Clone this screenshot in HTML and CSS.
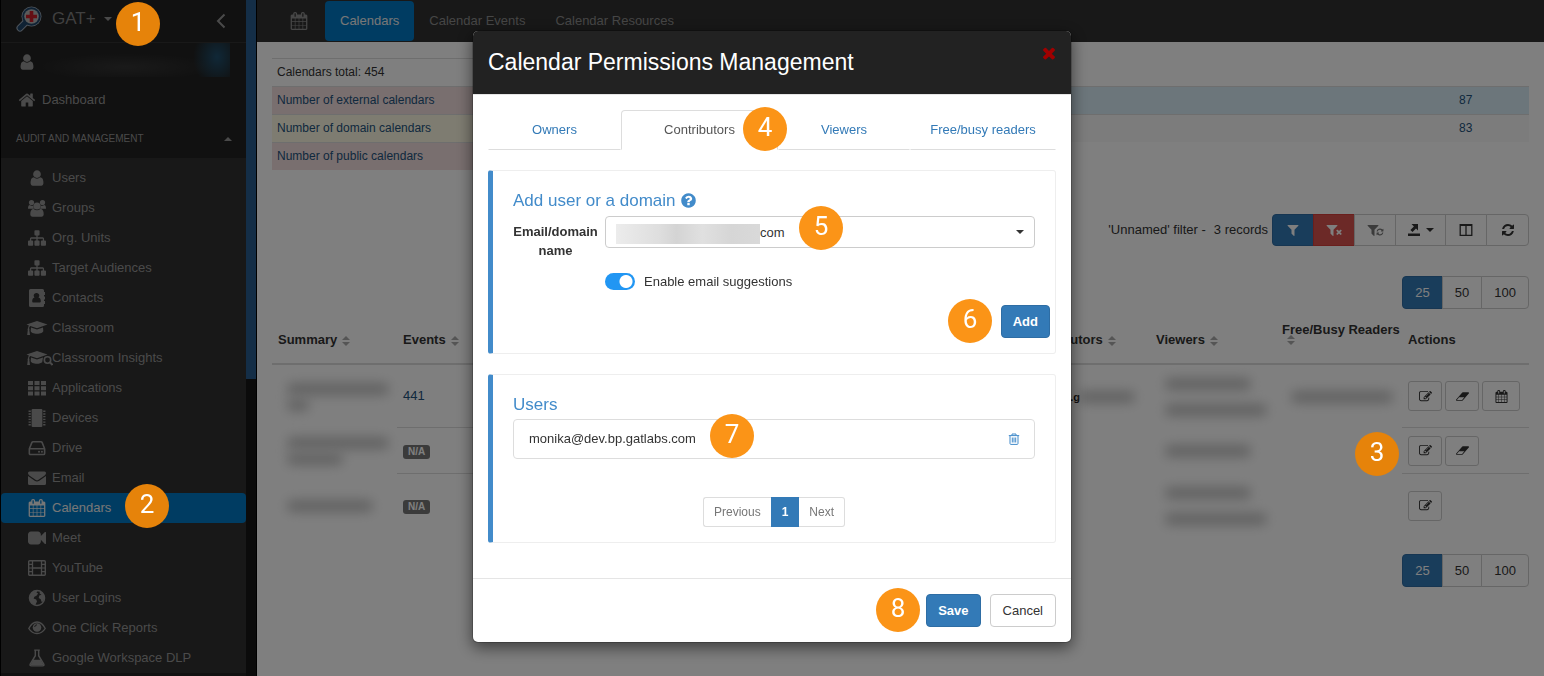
FILE: index.html
```
<!DOCTYPE html>
<html lang="en">
<head>
	<meta charset="utf-8">
	<title>GAT+ Calendars</title>
	<link rel="stylesheet" href="styles.css">
</head>
<body>

	<!-- icon set -->
	<svg class="sprite" aria-hidden="true">
		<symbol id="i-user" viewBox="0 0 1792 1792"><path d="M1536 1399q0 109-62.5 187t-150.5 78h-854q-88 0-150.5-78t-62.5-187q0-85 8.5-160.5t31.5-152 58.5-131 94-89 134.5-34.5q131 128 313 128t313-128q76 0 134.5 34.5t94 89 58.5 131 31.5 152 8.5 160.5zm-256-887q0 159-112.5 271.5t-271.5 112.5-271.5-112.5-112.5-271.5 112.5-271.5 271.5-112.5 271.5 112.5 112.5 271.5z"/></symbol>
		<symbol id="i-home" viewBox="0 0 1792 1792"><path d="M1472 992v480q0 26-19 45t-45 19h-384v-384h-256v384h-384q-26 0-45-19t-19-45v-480q0-1 .5-3t.5-3l575-474 575 474q1 2 1 6zm223-69l-62 74q-8 9-21 11h-3q-13 0-21-7l-692-577-692 577q-12 8-24 7-13-2-21-11l-62-74q-8-10-7-23.5t11-21.5l719-599q32-26 76-26t76 26l244 204v-195q0-14 9-23t23-9h192q14 0 23 9t9 23v408l219 182q10 8 11 21.5t-7 23.5z"/></symbol>
		<symbol id="i-group" viewBox="0 0 18 18"><circle cx="3.5" cy="3.6" r="2.6"/><circle cx="14.5" cy="3.6" r="2.6"/><path d="M0 9.5C0 7 .8 6 2 6c1 1 2.200 1.100 3.400.6A5 5 0 0 0 6 9.800H1.500C.5 9.800 0 9.800 0 9.500zM18 9.500C18 7 17.200 6 16 6c-1 1-2.200 1.100-3.400.6a5 5 0 0 1-.6 3.200h4.500c1 0 1.500 0 1.500-.3z"/><circle cx="9" cy="7" r="3.600"/><path d="M2.300 15.300c0-3.300 1-5.300 3.300-5.300 2 1.700 4.800 1.700 6.800 0 2.300 0 3.300 2 3.300 5.300 0 1.500-.9 2.400-2.200 2.400h-9c-1.300 0-2.200-.9-2.200-2.400z"/></symbol>
		<symbol id="i-sitemap" viewBox="0 0 1792 1792"><path d="M1792 1248v320q0 40-28 68t-68 28h-320q-40 0-68-28t-28-68v-320q0-40 28-68t68-28h96v-192h-512v192h96q40 0 68 28t28 68v320q0 40-28 68t-68 28h-320q-40 0-68-28t-28-68v-320q0-40 28-68t68-28h96v-192h-512v192h96q40 0 68 28t28 68v320q0 40-28 68t-68 28h-320q-40 0-68-28t-28-68v-320q0-40 28-68t68-28h96v-192q0-52 38-90t90-38h512v-192h-96q-40 0-68-28t-28-68v-320q0-40 28-68t68-28h320q40 0 68 28t28 68v320q0 40-28 68t-68 28h-96v192h512q52 0 90 38t38 90v192h96q40 0 68 28t28 68z"/></symbol>
		<symbol id="i-contacts" viewBox="0 0 18 18"><path fill-rule="evenodd" d="M2.500 0h12A1.500 1.500 0 0 1 16 1.500V3h1v3h-1v1.500h1v3h-1V12h1v3h-1v1.500a1.500 1.500 0 0 1-1.500 1.500h-12A1.500 1.500 0 0 1 1 16.500v-15A1.500 1.500 0 0 1 2.500 0zM8.500 4a2.600 2.600 0 0 0-2 4.500C4.800 8.800 4.200 10.500 4.200 12.200c0 .8.500 1.300 1.300 1.300h6c.8 0 1.300-.5 1.300-1.300 0-1.700-.6-3.400-2.300-3.700A2.600 2.600 0 0 0 8.500 4z"/></symbol>
		<symbol id="i-grad" viewBox="0 0 22 16"><path d="M11 1l10.500 3.600L11 8.200 4.300 5.900c-.8.600-1.100 1.500-1.200 2.600.5.300.6 1 .2 1.500L4 15H1.200l.6-5c-.4-.5-.3-1.200.2-1.500.1-1 .3-2 .9-2.900L.5 4.600z"/><path d="M5 7.500l6 2 6-2 .3 3.500c0 1.500-2.800 2.700-6.300 2.700S4.700 12.500 4.700 11z"/></symbol>
		<symbol id="i-gradsearch" viewBox="0 0 27 16"><path d="M11 1l10.500 3.600L11 8.200 4.300 5.900c-.8.600-1.100 1.500-1.200 2.600.5.300.6 1 .2 1.500L4 15H1.200l.6-5c-.4-.5-.3-1.200.2-1.500.1-1 .3-2 .9-2.900L.5 4.600z"/><path d="M5 7.500l6 2 6-2-.8 4.700c-1 .9-3 1.500-5.200 1.500-3.500 0-6.300-1.200-6.300-2.700z"/><circle cx="21.500" cy="10" r="3.200" fill="none" stroke="currentColor" stroke-width="1.600"/><path d="M24 12.400l2.500 2.600" stroke="currentColor" stroke-width="2"/></symbol>
		<symbol id="i-th" viewBox="0 0 18 16"><path d="M0 1h5v4H0zM6.500 1h5v4h-5zM13 1h5v4h-5zM0 6.200h5v4H0zM6.500 6.200h5v4h-5zM13 6.200h5v4h-5zM0 11.400h5v4H0zM6.500 11.400h5v4h-5zM13 11.400h5v4h-5z"/></symbol>
		<symbol id="i-chip" viewBox="0 0 16 16"><rect x="3.200" width="9.600" height="16" rx="1"/><path d="M.5 2h2M.5 4.400h2M.5 6.800h2M.5 9.200h2M.5 11.600h2M.5 14h2M13.500 2h2M13.500 4.400h2M13.500 6.800h2M13.500 9.200h2M13.500 11.600h2M13.500 14h2" stroke="currentColor" stroke-width="1.200"/></symbol>
		<symbol id="i-drive" viewBox="0 0 16 16"><path d="M1.200 8.700L3.400 3.200q.3-.8 1.100-.8h7q.8 0 1.100.8l2.200 5.500v4.100q0 1-1 1H2.200q-1 0-1-1zM1.200 8.700h13.600" fill="none" stroke="currentColor" stroke-width="1.400"/><circle cx="9.800" cy="11.300" r=".9"/><circle cx="12.400" cy="11.300" r=".9"/></symbol>
		<symbol id="i-mail" viewBox="0 0 18 16"><path d="M1.500 1.500h15q1.500 0 1.500 1.500c0 1.200-.8 2-1.700 2.700L10.500 9.700q-1.500 1-3 0L1.700 5.700C.8 5 0 4.200 0 3q0-1.500 1.500-1.500z"/><path d="M0 6l6.700 4.700q2.300 1.500 4.600 0L18 6v7.500q0 1.500-1.500 1.500h-15Q0 15 0 13.500z"/></symbol>
		<symbol id="i-cal" viewBox="0 0 1792 1792"><path d="M192 1664h288v-288h-288v288zm352 0h320v-288h-320v288zm-352-352h288v-320h-288v320zm352 0h320v-320h-320v320zm-352-384h288v-288h-288v288zm736 736h320v-288h-320v288zm-384-736h320v-288h-320v288zm768 736h288v-288h-288v288zm-384-352h320v-320h-320v320zm-352-864v-288q0-13-9.500-22.500t-22.500-9.500h-64q-13 0-22.500 9.500t-9.500 22.500v288q0 13 9.500 22.500t22.500 9.500h64q13 0 22.500-9.500t9.500-22.500zm736 864h288v-320h-288v320zm-384-384h320v-288h-320v288zm384 0h288v-288h-288v288zm32-480v-288q0-13-9.500-22.500t-22.500-9.500h-64q-13 0-22.500 9.500t-9.500 22.500v288q0 13 9.500 22.500t22.500 9.500h64q13 0 22.500-9.500t9.500-22.500zm384-64v1280q0 52-38 90t-90 38h-1408q-52 0-90-38t-38-90v-1280q0-52 38-90t90-38h128v-96q0-66 47-113t113-47h64q66 0 113 47t47 113v96h384v-96q0-66 47-113t113-47h64q66 0 113 47t47 113v96h128q52 0 90 38t38 90z"/></symbol>
		<symbol id="i-video" viewBox="0 0 1792 1792"><path d="M1792 352v1088q0 42-39 59-13 5-25 5-27 0-45-19l-403-403v166q0 119-84.500 203.500t-203.500 84.500h-704q-119 0-203.500-84.500t-84.500-203.500v-704q0-119 84.500-203.500t203.500-84.500h704q119 0 203.500 84.500t84.500 203.500v165l403-402q18-19 45-19 12 0 25 5 39 17 39 59z"/></symbol>
		<symbol id="i-film" viewBox="0 0 18 16"><g fill="none" stroke="currentColor"><rect x=".7" y=".7" width="16.600" height="14.600" rx="1" stroke-width="1.400"/><path d="M4.500.7v14.600M13.500.7v14.600M4.500 8h9" stroke-width="1.300"/><path d="M1 4.300h3.500M1 8h3.500M1 11.700h3.500M13.500 4.300H17M13.500 8H17M13.500 11.700H17" stroke-width="1.200"/></g></symbol>
		<symbol id="i-globe" viewBox="0 0 16 16"><circle cx="8" cy="8" r="6.700" fill="none" stroke="currentColor" stroke-width="1.300"/><path d="M3 3.500C5 1.800 7 1.500 8.500 1.800L7.500 3l1.500 1-1.500 2-1.800.8-.7 1.700 2.300.8.700 1.700-1.500 3.200C3 13.500 1.300 11 1.500 7.500zM10.500 2.200c2.500 1 4 3.300 4.100 5.800l-1.100 3.200-1.300.3-.9-2.500-1.800-1 .5-2.300 2-.7-1.700-1z"/></symbol>
		<symbol id="i-eye" viewBox="0 0 18 16"><path d="M.8 8.500C5-.2 13-.2 17.200 8.500 13 15.200 5 15.200.8 8.500z" fill="none" stroke="currentColor" stroke-width="1.400"/><circle cx="9" cy="7.500" r="4.300"/><path d="M6.700 7A2.300 2.300 0 0 1 9 4.800" fill="none" stroke="#303030" stroke-width="1"/></symbol>
		<symbol id="i-flask" viewBox="0 0 16 16"><path d="M5.500 1h5M6.500 1v5L2 13.400q-.7 1.600 1 1.600h10q1.700 0 1-1.600L9.500 6V1" fill="none" stroke="currentColor" stroke-width="1.300"/><path d="M4.700 9.500h6.600l2.700 5H2z"/></symbol>
		<symbol id="i-filter" viewBox="0 0 1792 1792"><path d="M1595 295q17 41-14 70l-493 493v742q0 42-39 59-13 5-25 5-27 0-45-19l-256-256q-19-19-19-45v-486l-493-493q-31-29-14-70 17-39 59-39h1280q42 0 59 39z"/></symbol>
		<symbol id="i-refresh" viewBox="0 0 1792 1792"><path d="M1639 1056q0 5-1 7-64 268-268 434.500t-478 166.500q-146 0-282.500-55t-243.500-157l-129 129q-19 19-45 19t-45-19-19-45v-448q0-26 19-45t45-19h448q26 0 45 19t19 45-19 45l-137 137q71 66 161 102t187 36q134 0 250-65t186-179q11-17 53-117 8-23 30-23h192q13 0 22.500 9.500t9.500 22.500zm25-800v448q0 26-19 45t-45 19h-448q-26 0-45-19t-19-45 19-45l138-138q-148-137-349-137-134 0-250 65t-186 179q-11 17-53 117-8 23-30 23h-199q-13 0-22.500-9.500t-9.500-22.500v-7q65-268 270-434.500t480-166.500q146 0 284 55.500t245 156.500l130-129q19-19 45-19t45 19 19 45z"/></symbol>
		<symbol id="i-times" viewBox="0 0 1792 1792"><path d="M1490 1322q0 40-28 68l-136 136q-28 28-68 28t-68-28l-294-294-294 294q-28 28-68 28t-68-28l-136-136q-28-28-28-68t28-68l294-294-294-294q-28-28-28-68t28-68l136-136q28-28 68-28t68 28l294 294 294-294q28-28 68-28t68 28l136 136q28 28 28 68t-28 68l-294 294 294 294q28 28 28 68z"/></symbol>
		<symbol id="i-export" viewBox="0 0 14 14"><path d="M1 10.500h12V13H1zM4.500 1H11v6.500L9 5.600 5.500 9 3.400 7l3.500-3.500z"/></symbol>
		<symbol id="i-columns" viewBox="0 0 14 14"><path d="M1.200 1.700h11.600v10.600H1.200zM1 2.400h12M7 2v10.300" fill="none" stroke="currentColor" stroke-width="1.300"/></symbol>
		<symbol id="i-edit" viewBox="0 0 1792 1792"><path d="M888 1184l116-116-152-152-116 116v56h96v96h56zm440-720q-16-16-33 1l-350 350q-17 17-1 33t33-1l350-350q17-17 1-33zm80 594v190q0 119-84.500 203.500t-203.500 84.500h-832q-119 0-203.500-84.500t-84.500-203.500v-832q0-119 84.500-203.500t203.500-84.500h832q63 0 117 25 15 7 18 23 3 17-9 29l-49 49q-14 14-32 8-23-6-45-6h-832q-66 0-113 47t-47 113v832q0 66 47 113t113 47h832q66 0 113-47t47-113v-126q0-13 9-22l64-64q15-15 35-7t20 29zm-96-738l288 288-672 672h-288v-288zm444 132l-92 92-288-288 92-92q28-28 68-28t68 28l152 152q28 28 28 68t-28 68z"/></symbol>
		<symbol id="i-eraser" viewBox="-64 0 1920 1792"><path d="M832 1408l336-384h-768l-336 384h768zm1013-1077q15 34 9.500 71.500t-30.500 65.500l-896 1024q-38 44-96 44h-768q-38 0-69.500-20.500t-47.500-54.500q-15-34-9.500-71.500t30.500-65.500l896-1024q38-44 96-44h768q38 0 69.500 20.500t47.500 54.500z"/></symbol>
		<symbol id="i-question" viewBox="0 0 1792 1792"><path d="M1024 1376v-192q0-14-9-23t-23-9h-192q-14 0-23 9t-9 23v192q0 14 9 23t23 9h192q14 0 23-9t9-23zm256-672q0-88-55.500-163t-138.500-116-170-41q-243 0-371 213-15 24 8 42l132 100q7 6 19 6 16 0 25-12 53-68 86-92 34-24 86-24 48 0 85.500 26t37.500 59q0 38-20 61t-68 45q-63 28-115.500 86.500t-52.500 125.500v36q0 14 9 23t23 9h192q14 0 23-9t9-23q0-19 21.500-49.500t54.500-49.500q32-18 49-28.500t46-35 44.500-48 28-60.500 12.500-81zm384 192q0 209-103 385.500t-279.500 279.500-385.500 103-385.500-103-279.500-279.500-103-385.500 103-385.500 279.500-279.500 385.500-103 385.500 103 279.500 279.500 103 385.500z"/></symbol>
		<symbol id="i-trash" viewBox="0 0 12 12"><path d="M.8 2.600h10.400M4 2.400V1h4v1.400M2 2.800v7.700q0 .9.900.9h6.200q.9 0 .9-.9V2.800M4.300 4.500v5M6 4.500v5M7.700 4.500v5" fill="none" stroke="currentColor" stroke-width="1"/></symbol>
		<symbol id="i-sort" viewBox="0 0 8 10"><path d="M4 0l4 4H0zM0 6h8l-4 4z"/></symbol>
	</svg>

	<div class="page">
		<aside class="sidebar">
			<div class="sidebar-content">
				<div class="brand">
					<svg class="logo" viewBox="0 0 26 26">
						<path d="M10 16L4 22" stroke="#9aa7b5" stroke-width="7" stroke-linecap="round"/>
						<circle cx="15.500" cy="10.500" r="10" fill="#9aa7b5"/>
						<path d="M10 16L4 22" stroke="#1f4468" stroke-width="5" stroke-linecap="round"/>
						<circle cx="15.500" cy="10.500" r="9.200" fill="#1f4468"/>
						<circle cx="15.500" cy="10.500" r="7.300" fill="#b4b4b4"/>
						<path d="M13.700 5h3.600v3.700H21v3.600h-3.700V16h-3.600v-3.700H10V8.700h3.700z" fill="#c81e28"/>
					</svg>
					<span class="brand-name">GAT+</span>
					<span class="caret"></span>
					<button class="collapse" aria-label="Collapse menu"><svg viewBox="0 0 10 16"><path d="M8.500 1.500L2 8l6.500 6.500" fill="none" stroke="currentColor" stroke-width="2"/></svg></button>
					<span class="step step-1 step-dim">1</span>
				</div>
				<div class="account">
					<svg class="icon"><use href="#i-user"/></svg>
					<span class="account-name"></span>
				</div>
				<a class="dashboard" href="#"><svg class="icon"><use href="#i-home"/></svg>Dashboard</a>
				<button class="section">AUDIT AND MANAGEMENT <span class="caret caret-up"></span></button>
				<nav class="menu">
					<a href="#"><svg class="icon"><use href="#i-user"/></svg>Users</a>
					<a href="#"><svg class="icon"><use href="#i-group"/></svg>Groups</a>
					<a href="#"><svg class="icon"><use href="#i-sitemap"/></svg>Org. Units</a>
					<a href="#"><svg class="icon"><use href="#i-sitemap"/></svg>Target Audiences</a>
					<a href="#"><svg class="icon"><use href="#i-contacts"/></svg>Contacts</a>
					<a href="#"><svg class="icon icon-grad"><use href="#i-grad"/></svg>Classroom</a>
					<a href="#"><svg class="icon icon-gradsearch"><use href="#i-gradsearch"/></svg>Classroom Insights</a>
					<a href="#"><svg class="icon"><use href="#i-th"/></svg>Applications</a>
					<a href="#"><svg class="icon"><use href="#i-chip"/></svg>Devices</a>
					<a href="#"><svg class="icon"><use href="#i-drive"/></svg>Drive</a>
					<a href="#"><svg class="icon"><use href="#i-mail"/></svg>Email</a>
					<a class="active" href="#"><svg class="icon"><use href="#i-cal"/></svg>Calendars<span class="step step-2 step-dim">2</span></a>
					<a href="#"><svg class="icon"><use href="#i-video"/></svg>Meet</a>
					<a href="#"><svg class="icon"><use href="#i-film"/></svg>YouTube</a>
					<a href="#"><svg class="icon"><use href="#i-globe"/></svg>User Logins</a>
					<a href="#"><svg class="icon"><use href="#i-eye"/></svg>One Click Reports</a>
					<a href="#"><svg class="icon"><use href="#i-flask"/></svg>Google Workspace DLP</a>
				</nav>
			</div>
			<div class="scrollbar"><div class="thumb"></div></div>
		</aside>

		<main class="main">
			<nav class="topbar">
				<svg class="icon"><use href="#i-cal"/></svg>
				<a class="active" href="#">Calendars</a>
				<a href="#">Calendar Events</a>
				<a href="#">Calendar Resources</a>
			</nav>

			<div class="content">
				<div class="stats">
					<table class="stats-table">
						<tr><td>Calendars total: 454</td></tr>
						<tr class="danger"><td><a href="#">Number of external calendars</a></td></tr>
						<tr class="warning"><td><a href="#">Number of domain calendars</a></td></tr>
						<tr class="danger"><td><a href="#">Number of public calendars</a></td></tr>
					</table>
					<table class="stats-table stats-right">
						<tr class="info"><td></td><td class="value"><a href="#">87</a></td></tr>
						<tr class="plain"><td></td><td class="value"><a href="#">83</a></td></tr>
					</table>
				</div>

				<div class="toolbar">
					<span>'Unnamed' filter -</span>
					<span>3 records</span>
					<div class="btn-group tools">
						<button class="blue" aria-label="Filter"><svg class="icon-sm"><use href="#i-filter"/></svg></button>
						<button class="red" aria-label="Clear filter"><svg class="icon-sm"><use href="#i-filter"/></svg><svg class="icon-xs"><use href="#i-times"/></svg></button>
						<button class="muted" aria-label="Reload filter"><svg class="icon-sm"><use href="#i-filter"/></svg><svg class="icon-xs"><use href="#i-refresh"/></svg></button>
						<button class="export" aria-label="Export"><svg class="icon-sm"><use href="#i-export"/></svg><span class="caret"></span></button>
						<button aria-label="Columns"><svg class="icon-sm"><use href="#i-columns"/></svg></button>
						<button aria-label="Refresh"><svg class="icon-sm"><use href="#i-refresh"/></svg></button>
					</div>
				</div>

				<div class="page-size">
					<div class="btn-group">
						<button class="blue">25</button><button>50</button><button>100</button>
					</div>
				</div>

				<table class="grid">
					<colgroup>
						<col class="c-first"><col class="c-normal"><col><col class="c-wide"><col class="c-normal"><col class="c-normal"><col class="c-last">
					</colgroup>
					<thead>
						<tr>
							<th>Summary<svg class="sort"><use href="#i-sort"/></svg></th>
							<th>Events<svg class="sort"><use href="#i-sort"/></svg></th>
							<th></th>
							<th>Contributors<svg class="sort"><use href="#i-sort"/></svg></th>
							<th>Viewers<svg class="sort"><use href="#i-sort"/></svg></th>
							<th class="tight">Free/Busy Readers <svg class="sort"><use href="#i-sort"/></svg></th>
							<th>Actions</th>
						</tr>
					</thead>
					<tbody>
						<tr class="tall">
							<td class="bare"><span class="smudge smudge-l"></span><span class="smudge smudge-xs"></span></td>
							<td><a class="count" href="#">441</a></td>
							<td></td>
							<td class="bare"><div class="contributor">o.g<span class="smudge smudge-s"></span></div></td>
							<td class="bare spaced"><span class="smudge smudge-m"></span><span class="smudge smudge-l"></span></td>
							<td class="bare"><span class="smudge smudge-l"></span></td>
							<td>
								<div class="actions">
									<button aria-label="Edit"><svg><use href="#i-edit"/></svg></button>
									<button aria-label="Clear"><svg><use href="#i-eraser"/></svg></button>
									<button class="events" aria-label="Events"><svg><use href="#i-cal"/></svg></button>
								</div>
							</td>
						</tr>
						<tr>
							<td class="bare"><span class="smudge smudge-l"></span><span class="smudge smudge-s"></span></td>
							<td><span class="tag">N/A</span></td>
							<td></td>
							<td class="bare"></td>
							<td class="bare spaced"><span class="smudge smudge-m"></span></td>
							<td class="bare"></td>
							<td class="anchor">
								<div class="actions">
									<button aria-label="Edit"><svg><use href="#i-edit"/></svg></button>
									<button aria-label="Clear"><svg><use href="#i-eraser"/></svg></button>
								</div>
								<span class="step step-3 step-dim">3</span>
							</td>
						</tr>
						<tr class="tall">
							<td class="bare"><span class="smudge smudge-m"></span></td>
							<td><span class="tag">N/A</span></td>
							<td></td>
							<td class="bare"></td>
							<td class="bare spaced"><span class="smudge smudge-m"></span><span class="smudge smudge-l"></span></td>
							<td class="bare"></td>
							<td>
								<div class="actions">
									<button aria-label="Edit"><svg><use href="#i-edit"/></svg></button>
								</div>
							</td>
						</tr>
					</tbody>
				</table>

				<div class="page-size page-size-bottom">
					<div class="btn-group">
						<button class="blue">25</button><button>50</button><button>100</button>
					</div>
				</div>
			</div>
		</main>
	</div>

	<div class="backdrop">
		<div class="modal" role="dialog" aria-labelledby="modal-title">
			<div class="modal-header">
				<h1 id="modal-title">Calendar Permissions Management</h1>
				<button class="close" aria-label="Close"><svg><use href="#i-times"/></svg></button>
			</div>

			<div class="modal-body">
				<nav class="tabs">
					<a href="#">Owners</a>
					<a class="active" href="#">Contributors<span class="step step-4">4</span></a>
					<a href="#">Viewers</a>
					<a href="#">Free/busy readers</a>
				</nav>

				<section class="callout">
					<h2>Add user or a domain <svg><use href="#i-question"/></svg></h2>
					<div class="field">
						<label for="email">Email/domain name</label>
						<div class="select-box">
							<select id="email"><option>com</option></select>
							<span class="mask"></span>
							<span class="caret"></span>
							<span class="step step-5">5</span>
						</div>
					</div>
					<label class="switch"><input type="checkbox" checked>Enable email suggestions</label>
					<div class="add-row">
						<span class="step step-6">6</span>
						<button class="btn btn-primary">Add</button>
					</div>
				</section>

				<section class="callout">
					<h2>Users</h2>
					<div class="user-item">
						<span>monika@dev.bp.gatlabs.com</span>
						<button class="trash" aria-label="Remove"><svg><use href="#i-trash"/></svg></button>
						<span class="step step-7">7</span>
					</div>
					<div class="pager">
						<button>Previous</button><button class="current">1</button><button>Next</button>
					</div>
				</section>
			</div>

			<div class="modal-footer">
				<span class="step step-8">8</span>
				<button class="btn btn-primary">Save</button>
				<button class="btn">Cancel</button>
			</div>
		</div>
	</div>

</body>
</html>
```
FILE: styles.css
```
*{
	box-sizing: border-box;
}
body{
	margin: 0;
	font-family: "Liberation Sans", Arial, sans-serif;
	font-size: 13px;
	line-height: 18px;
	color: #333;
	background: #fff;
}
a{
	color: inherit;
	text-decoration: none;
}
button, select{
	font-family: inherit;
	font-size: inherit;
	color: inherit;
	cursor: pointer;
}
svg{
	fill: currentColor;
	flex: none;
}
.sprite{
	position: absolute;
	width: 0;
	height: 0;
}
.page{
	display: flex;
	height: 100vh;
	overflow: hidden;
}
.icon{
	width: 18px;
	height: 18px;
}
.caret{
	display: inline-block;
	border: 4px solid transparent;
	border-top-color: currentColor;
	border-bottom: 0;
}
.caret-up{
	border-top: 0;
	border-bottom: 4px solid currentColor;
}

/* numbered steps */
.step{
	position: absolute;
	z-index: 20;
	width: 44px;
	height: 44px;
	border-radius: 50%;
	background: #fb9417;
	color: #fff;
	font-family: Roboto, sans-serif;
	font-size: 26px;
	font-weight: 400;
	line-height: 40px;
	text-align: center;
}
.step-dim{ background: #e6830a; }
.step-1{ left: 115px; top: 2px; }
.step-2{ left: 124px; top: -9px; }
.step-3{ left: -47px; top: 4px; }
.step-4{ left: 121px; top: -4px; }
.step-5{ left: 194px; top: -10px; }
.step-6{ right: 58px; top: -6px; }
.step-7{ left: 196px; top: -6px; }
.step-8{ right: 151px; top: 9px; }

/* sidebar */
.sidebar{
	display: flex;
	flex: none;
	width: 257px;
	border-left: 1px solid #000;
	border-right: 1px solid #000;
	background: #222;
	color: #959595;
	overflow: hidden;
}
.sidebar-content{
	flex: 1;
}
.scrollbar{
	width: 10px;
	background: #161616;
}
.thumb{
	height: 56%;
	background: #295d8f;
}
.brand{
	position: relative;
	display: flex;
	align-items: center;
	height: 43px;
	padding: 0 20px 4px 15px;
	border-bottom: 1px solid #333;
}
.logo{
	width: 26px;
	height: 26px;
}
.brand-name{
	margin: 0 8px 0 10px;
	font-size: 17px;
	color: #808080;
}
.collapse{
	margin-left: auto;
	padding: 4px 0 0;
	border: 0;
	background: none;
}
.collapse svg{
	display: block;
	width: 10px;
	height: 16px;
}
.account{
	display: flex;
	align-items: center;
	height: 37px;
	padding-left: 17px;
}
.account-name{
	flex: 1;
	height: 34px;
	margin: 0 16px 4px 0;
	background: radial-gradient(ellipse 24px 30px at 181px 14px, #20506f, transparent), radial-gradient(ellipse 90px 14px at 90px 24px, #343434, transparent);
}
.dashboard{
	display: flex;
	align-items: center;
	gap: 6px;
	height: 39px;
	padding-left: 17px;
}
.section{
	display: flex;
	align-items: center;
	justify-content: space-between;
	width: 100%;
	height: 39px;
	padding: 0 14px 0 15px;
	border: 0;
	background: none;
	font-size: 10px;
}
.menu{
	padding-top: 5px;
	background: #303030;
}
.menu a{
	position: relative;
	display: flex;
	align-items: center;
	gap: 6px;
	height: 30px;
	padding-left: 27px;
	border-radius: 4px;
}
.menu .icon-grad{
	width: 22px;
	height: 16px;
	margin: 0 -2px;
}
.menu .icon-gradsearch{
	width: 27px;
	height: 16px;
	margin: 0 -7px 0 -2px;
}
.menu .active, .topbar .active{
	background: #0078c4;
	color: #eee;
}

/* main area */
.main{
	flex: 1;
	min-width: 0;
}
.topbar{
	display: flex;
	align-items: center;
	height: 42px;
	padding-left: 33px;
	background: #303030;
	color: #8c8c8c;
}
.topbar .icon{
	margin-right: 17px;
}
.topbar a{
	padding: 11px 15px;
	border-radius: 4px;
}
.content{
	padding: 16px 15px;
}
.stats{
	display: flex;
	align-items: flex-start;
	font-size: 12px;
	line-height: 17px;
}
.stats-table{
	width: 50%;
	border-collapse: separate;
	border-spacing: 0;
}
.stats-table td{
	padding: 5px;
	border-top: 1px solid #ddd;
}
.stats-table a{
	color: #23527c;
}
.stats-right{
	margin-top: 28px;
}
.stats-table .value{
	width: 75px;
}
.danger{ background: #f2dede; }
.warning{ background: #fcf8e3; }
.info{ background: #d9edf7; }
.plain{ background: #f9f9f9; }

.toolbar{
	display: flex;
	justify-content: flex-end;
	align-items: center;
	gap: 8px;
	margin-top: 44px;
}
.tools{
	margin-left: -4px;
}
.btn-group{
	display: flex;
}
.btn-group button{
	display: flex;
	align-items: center;
	justify-content: center;
	height: 33px;
	margin-left: -1px;
	padding: 0 12px;
	border: 1px solid #ccc;
	background: #fff;
}
.btn-group button:first-child{
	margin-left: 0;
	border-radius: 4px 0 0 4px;
}
.btn-group button:last-child{
	border-radius: 0 4px 4px 0;
}
.tools button{
	width: 42px;
	height: 32px;
	padding: 0;
}
.tools button:last-child{
	width: 43px;
}
.tools .export{
	gap: 5px;
	width: 51px;
}
.btn-group .blue{
	background: #337ab7;
	border-color: #2e6da4;
	color: #fff;
}
.btn-group .red{
	background: #d9534f;
	border-color: #d43f3a;
	color: #fff;
}
.btn-group .muted{
	color: #777;
}
.icon-sm{
	width: 14px;
	height: 14px;
}
.icon-xs{
	width: 8px;
	height: 8px;
	margin: 4px 0 0 -4px;
}
.page-size{
	display: flex;
	justify-content: flex-end;
	margin-top: 30px;
}
.page-size-bottom{
	margin-top: 17px;
}

/* calendars list */
.grid{
	width: 100%;
	table-layout: fixed;
	border-collapse: separate;
	border-spacing: 0;
}
.c-first{ width: 125px; }
.c-normal{ width: 126px; }
.c-wide{ width: 132px; }
.c-last{ width: 127px; }
.grid th{
	height: 56px;
	padding: 0 6px 14px;
	border-bottom: 2px solid #ddd;
	text-align: left;
	vertical-align: bottom;
}
.grid .tight{
	padding: 0 0 18px 6px;
	line-height: 9px;
}
.sort{
	width: 8px;
	height: 10px;
	margin-left: 5px;
	color: #aaa;
	vertical-align: -2px;
}
.grid td{
	height: 46px;
	padding: 0 6px;
	border-bottom: 1px solid #ddd;
}
.grid .tall td{
	height: 63px;
}
.grid .bare, .grid tr:last-child td{
	border-bottom: 0;
}
.grid .anchor{
	position: relative;
}
.count{
	color: #23527c;
}
.tag{
	display: inline-block;
	padding: 0 5px;
	border-radius: 3px;
	background: #777;
	color: #fff;
	font-size: 10px;
	font-weight: bold;
	line-height: 14px;
}
.smudge{
	display: block;
	height: 12px;
	margin: 4px 10px;
	background: #c4c4c4;
	filter: blur(6px);
}
.smudge-xs{ width: 20px; }
.smudge-s{ width: 54px; }
.smudge-m{ width: 84px; }
.smudge-l{ width: 100px; }
.spaced .smudge{
	margin: 0 10px;
}
.spaced .smudge + .smudge{
	margin-top: 14px;
}
.contributor{
	display: flex;
	align-items: center;
	justify-content: flex-end;
	color: #000;
	font-size: 11px;
	font-weight: bold;
}
.contributor .smudge{
	margin-left: 0;
}
.actions{
	display: flex;
	gap: 3px;
}
.actions button{
	display: flex;
	align-items: center;
	justify-content: center;
	width: 34px;
	height: 30px;
	padding: 0;
	border: 1px solid #ccc;
	border-radius: 3px;
	background: #fff;
}
.actions .events{
	width: 38px;
}
.actions svg{
	width: 13px;
	height: 13px;
}

/* modal */
.backdrop{
	position: fixed;
	inset: 0;
	z-index: 10;
	padding: 30px 10px;
	background: rgba(0,0,0,0.5);
}
.modal{
	max-width: 600px;
	margin: 0 auto;
	border: 1px solid rgba(0,0,0,0.2);
	border-radius: 6px;
	background: #fff;
	background-clip: padding-box;
	box-shadow: 0 5px 15px rgba(0,0,0,0.5);
}
.modal-header{
	display: flex;
	justify-content: space-between;
	align-items: flex-start;
	height: 64px;
	padding: 13px 15px;
	border-bottom: 1px solid #e5e5e5;
	border-radius: 5px 5px 0 0;
	background: #222;
	color: #fff;
}
.modal-header h1{
	margin: 0;
	font-size: 23px;
	font-weight: 400;
	line-height: 36px;
}
.close{
	margin-right: -2px;
	padding: 0;
	border: 0;
	background: none;
	color: #a00000;
}
.close svg{
	display: block;
	width: 18px;
	height: 18px;
}
.modal-body{
	padding: 15px;
}
.tabs{
	display: grid;
	grid-template-columns: 133fr 157fr 132fr 146fr;
	margin-bottom: 20px;
}
.tabs a{
	position: relative;
	padding: 10px 0;
	border: 1px solid transparent;
	border-bottom-color: #ddd;
	color: #337ab7;
	text-align: center;
}
.tabs .active{
	border-color: #ddd;
	border-bottom-color: #fff;
	border-radius: 4px 4px 0 0;
	color: #555;
}
.callout{
	margin-bottom: 20px;
	padding: 20px 20px 15px;
	border: 1px solid #eee;
	border-left: 5px solid #428bca;
	border-radius: 3px;
}
.callout h2{
	display: flex;
	align-items: center;
	gap: 4px;
	margin: 0 0 5px;
	color: #428bca;
	font-size: 17px;
	font-weight: 400;
	line-height: 19px;
}
.callout h2 svg{
	width: 17px;
	height: 17px;
}
.field{
	display: grid;
	grid-template-columns: 85px 1fr;
	column-gap: 7px;
	padding: 1px 0 13px;
}
.field label{
	padding-top: 6px;
	font-weight: bold;
	line-height: 19px;
	text-align: center;
}
.select-box{
	position: relative;
	height: 32px;
}
.select-box select{
	width: 100%;
	height: 32px;
	padding: 0 30px 0 154px;
	border: 1px solid #ccc;
	border-radius: 4px;
	background: #fff;
	appearance: none;
}
.select-box .caret{
	position: absolute;
	right: 11px;
	top: 14px;
}
.mask{
	position: absolute;
	left: 11px;
	top: 8px;
	width: 144px;
	height: 20px;
	background: linear-gradient(90deg, #ececec, #dedede 30%, #d4d4d4 42%, #e0e0e0 60%, #d6d6d6 80%, #d9d9d9);
}
.switch{
	display: flex;
	align-items: center;
	gap: 9px;
	height: 17px;
	margin: 0 0 15px 92px;
}
.switch input{
	appearance: none;
	width: 30px;
	height: 17px;
	margin: 0;
	border-radius: 9px;
	background: radial-gradient(circle at 21px 50%, #fff 6px, #2196f3 7px);
}
.add-row{
	position: relative;
	display: flex;
	justify-content: flex-end;
	margin-right: -15px;
}
.btn{
	padding: 6px 12px;
	border: 1px solid #ccc;
	border-radius: 4px;
	background: #fff;
	line-height: 19px;
}
.btn-primary{
	padding: 6px 11px;
	border-color: #2e6da4;
	background: #337ab7;
	color: #fff;
	font-weight: bold;
}
.user-item{
	position: relative;
	display: flex;
	align-items: center;
	justify-content: space-between;
	height: 40px;
	padding: 0 14px 0 15px;
	border: 1px solid #ddd;
	border-radius: 4px;
}
.trash{
	padding: 0;
	border: 0;
	background: none;
	color: #428bca;
}
.trash svg{
	display: block;
	width: 12px;
	height: 12px;
}
.pager{
	display: flex;
	justify-content: center;
	margin-top: 38px;
	font-size: 12px;
}
.pager button{
	height: 30px;
	padding: 0 10px;
	border: 1px solid #ddd;
	background: #fff;
	color: #777;
}
.pager button:first-child{
	border-right: 0;
	border-radius: 3px 0 0 3px;
}
.pager button:last-child{
	border-left: 0;
	border-radius: 0 3px 3px 0;
}
.pager .current{
	border-color: #337ab7;
	background: #337ab7;
	color: #fff;
	font-weight: bold;
}
.modal-footer{
	position: relative;
	display: flex;
	justify-content: flex-end;
	gap: 9px;
	padding: 15px;
	border-top: 1px solid #e5e5e5;
}
```
